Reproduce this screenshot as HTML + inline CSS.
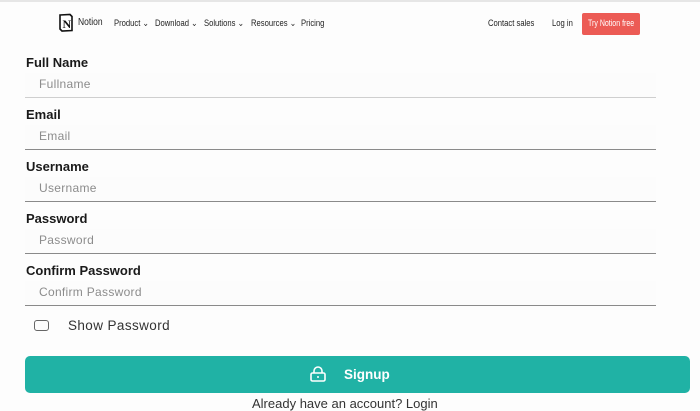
<!DOCTYPE html>
<html><head><style>
*{margin:0;padding:0;box-sizing:border-box}
body{width:700px;height:400px;overflow:hidden;background:#fdfdfd;font-family:"Liberation Sans",sans-serif;position:relative}
.top{position:absolute;top:0;left:0;width:700px;height:2px;background:#e6e6e6}
.nav{position:absolute;top:18px;font-size:9px;color:#222;transform:scaleX(.85);transform-origin:left;white-space:nowrap}
.lbl{position:absolute;left:26px;font-size:13px;font-weight:bold;color:#1a1a1a}
.inp{position:absolute;left:25px;width:631px;height:25px;background:#fcfcfc;border-bottom:1.5px solid #8a8a8a;font-size:12px;color:#8c8c8c;padding:4px 0 0 14px;letter-spacing:.3px}
</style></head><body>
<div class="top"></div>
<svg style="position:absolute;left:58px;top:13px" width="16" height="19" viewBox="0 0 16 19"><path d="M2 2 L12 1.5 L14 3.5 L14 17.5 L4 18 L2 16 Z" fill="#fff" stroke="#111" stroke-width="1.6"/><text x="4.5" y="15" font-family="Liberation Serif" font-weight="bold" font-size="12" fill="#111">N</text></svg>
<div class="nav" style="left:78px;font-size:10px;top:17px">Notion</div>
<div class="nav" style="left:114px">Product ⌄</div>
<div class="nav" style="left:155px">Download ⌄</div>
<div class="nav" style="left:204px">Solutions ⌄</div>
<div class="nav" style="left:251px">Resources ⌄</div>
<div class="nav" style="left:301px">Pricing</div>
<div class="nav" style="left:488px">Contact sales</div>
<div class="nav" style="left:552px">Log in</div>
<div style="position:absolute;left:582px;top:13px;width:58px;height:22px;background:#ec5b55;border-radius:2px"></div>
<div class="nav" style="left:588px;color:#fff;font-size:9px;transform:scaleX(.78)">Try Notion free</div>

<div class="lbl" style="top:55px">Full Name</div>
<div class="inp" style="top:73px;border-bottom-color:#cfcfcf">Fullname</div>
<div class="lbl" style="top:107px">Email</div>
<div class="inp" style="top:125px">Email</div>
<div class="lbl" style="top:159px">Username</div>
<div class="inp" style="top:177px">Username</div>
<div class="lbl" style="top:211px">Password</div>
<div class="inp" style="top:229px">Password</div>
<div class="lbl" style="top:263px">Confirm Password</div>
<div class="inp" style="top:281px">Confirm Password</div>

<div style="position:absolute;left:34px;top:320px;width:15px;height:11px;border:1.3px solid #666;border-radius:3px"></div>
<div style="position:absolute;left:68px;top:318px;font-size:13.5px;color:#333;letter-spacing:.4px">Show Password</div>

<div style="position:absolute;left:25px;top:356px;width:665px;height:37px;background:#20b2a5;border-radius:5px"></div>
<svg style="position:absolute;left:309px;top:366px" width="18" height="16" viewBox="0 0 18 16"><path d="M5 7 V5 a4 4 0 0 1 8 0 V7" fill="none" stroke="#fff" stroke-width="1.6"/><rect x="2" y="7" width="14" height="8" rx="1.5" fill="none" stroke="#fff" stroke-width="1.6"/><circle cx="9" cy="11" r="1" fill="#fff"/></svg>
<div style="position:absolute;left:344px;top:367px;font-size:13.5px;color:#fff;font-weight:bold">Signup</div>
<div style="position:absolute;left:252px;top:396px;font-size:13px;color:#333">Already have an account? Login</div>
</body></html>
